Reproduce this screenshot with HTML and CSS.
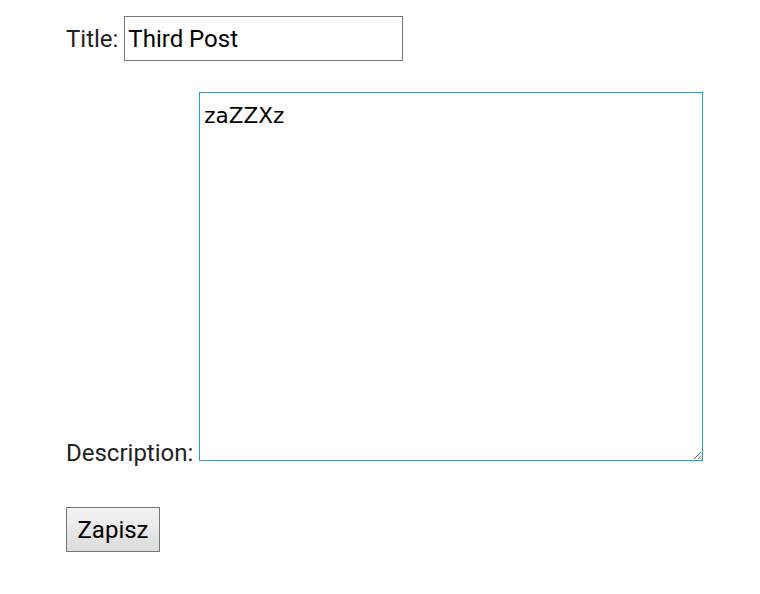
FILE: index.html
```html
<!DOCTYPE html>
<html>
<head>
<meta charset="utf-8">
<link rel="stylesheet" href="styles.css">
</head>
<body>
<form class="post-form">
  <div class="row row-title">
    <label for="title">Title:</label>
    <input id="title" class="title-input" type="text" value="Third Post">
  </div>
  <div class="row row-desc">
    <label for="desc">Description:</label>
    <textarea id="desc" class="desc-input">zaZZXz</textarea>
  </div>
  <div class="row row-submit">
    <button type="button" class="submit-btn">Zapisz</button>
  </div>
</form>
</body>
</html>
```
FILE: styles.css
```css
html, body {
  margin: 0;
  padding: 0;
  background: #ffffff;
}
body {
  font-family: Roboto, "Liberation Sans", sans-serif;
  font-size: 24px;
  color: #222222;
}
.post-form {
  padding: 16px 66px 0 66px;
}
.row {
  line-height: 28px;
  white-space: nowrap;
}
label {
  color: #222;
}
.title-input {
  box-sizing: border-box;
  width: 279px;
  height: 45px;
  margin: 0;
  padding: 4px 3px;
  border: 1px solid #767676;
  border-radius: 0;
  font-family: Roboto, "Liberation Sans", sans-serif;
  font-size: 24px;
  color: #000;
  outline: none;
}
.row-desc {
  margin-top: 31px;
}
.desc-input {
  box-sizing: border-box;
  width: 504px;
  height: 369px;
  margin: 0;
  padding: 10px 4px 8px 4px;
  border: 1px solid #1ba1e2;
  border-radius: 0;
  font-family: "DejaVu Sans", Verdana, sans-serif;
  font-size: 21.5px;
  color: #000;
  outline: none;
  vertical-align: baseline;
}
.row-submit {
  margin-top: 40px;
}
.submit-btn {
  box-sizing: border-box;
  width: 94px;
  height: 45px;
  margin: 0;
  padding: 0 8px;
  border: 1px solid #767676;
  border-radius: 0;
  background: linear-gradient(#f3f3f3, #dcdcdc);
  font-family: Roboto, "Liberation Sans", sans-serif;
  font-size: 24px;
  color: #000;
}
```
